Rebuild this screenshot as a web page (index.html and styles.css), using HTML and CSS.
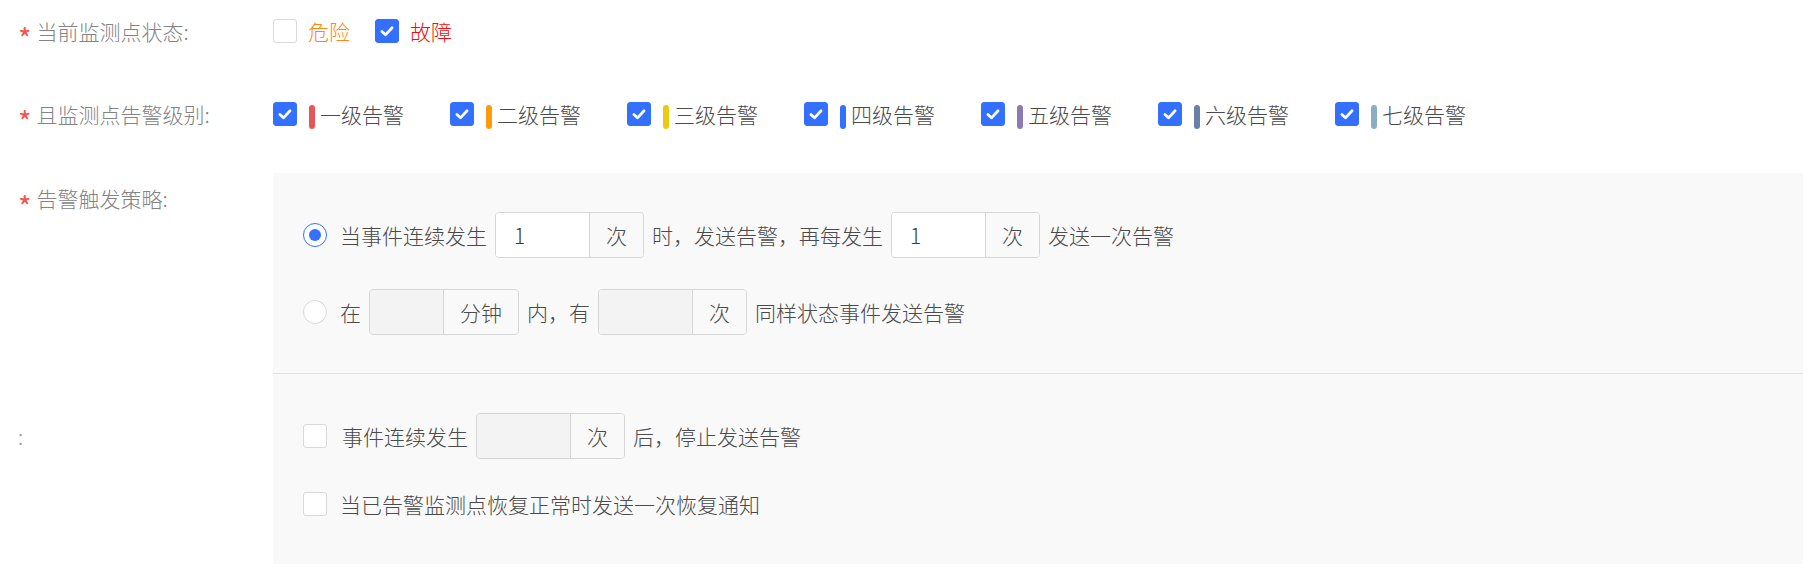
FILE: index.html
```html
<!DOCTYPE html>
<html lang="zh-CN">
<head>
<meta charset="utf-8">
<title>告警策略</title>
<link rel="stylesheet" href="styles.css">
</head>
<body>
<div class="form">
  <div class="item item-status">
    <div class="label"><span class="star">*</span>当前监测点状态:</div>
    <div class="content">
      <label class="chk"><span class="box"></span><span class="txt danger">危险</span></label>
      <label class="chk"><span class="box on"><svg viewBox="0 0 16 16"><path d="M4.3 8.3 L6.9 10.8 L11.7 5.6"/></svg></span><span class="txt fault">故障</span></label>
    </div>
  </div>

  <div class="item item-level">
    <div class="label"><span class="star">*</span>且监测点告警级别:</div>
    <div class="content">
      <label class="lvl"><span class="box on"><svg viewBox="0 0 16 16"><path d="M4.3 8.3 L6.9 10.8 L11.7 5.6"/></svg></span><span class="bar c1"></span><span class="txt">一级告警</span></label>
      <label class="lvl"><span class="box on"><svg viewBox="0 0 16 16"><path d="M4.3 8.3 L6.9 10.8 L11.7 5.6"/></svg></span><span class="bar c2"></span><span class="txt">二级告警</span></label>
      <label class="lvl"><span class="box on"><svg viewBox="0 0 16 16"><path d="M4.3 8.3 L6.9 10.8 L11.7 5.6"/></svg></span><span class="bar c3"></span><span class="txt">三级告警</span></label>
      <label class="lvl"><span class="box on"><svg viewBox="0 0 16 16"><path d="M4.3 8.3 L6.9 10.8 L11.7 5.6"/></svg></span><span class="bar c4"></span><span class="txt">四级告警</span></label>
      <label class="lvl"><span class="box on"><svg viewBox="0 0 16 16"><path d="M4.3 8.3 L6.9 10.8 L11.7 5.6"/></svg></span><span class="bar c5"></span><span class="txt">五级告警</span></label>
      <label class="lvl"><span class="box on"><svg viewBox="0 0 16 16"><path d="M4.3 8.3 L6.9 10.8 L11.7 5.6"/></svg></span><span class="bar c6"></span><span class="txt">六级告警</span></label>
      <label class="lvl"><span class="box on"><svg viewBox="0 0 16 16"><path d="M4.3 8.3 L6.9 10.8 L11.7 5.6"/></svg></span><span class="bar c7"></span><span class="txt">七级告警</span></label>
    </div>
  </div>

  <div class="item item-panel">
    <div class="label label-top1"><span class="star">*</span>告警触发策略:</div>
    <div class="panel panel-first">
      <div class="row">
        <span class="radio on"></span>
        <span>当事件连续发生</span>
        <span class="ig"><span class="in">1</span><span class="add">次</span></span>
        <span>时，发送告警，再每发生</span>
        <span class="ig"><span class="in">1</span><span class="add">次</span></span>
        <span>发送一次告警</span>
      </div>
      <div class="row">
        <span class="radio"></span>
        <span>在</span>
        <span class="ig"><span class="in dis narrow"></span><span class="add">分钟</span></span>
        <span>内，有</span>
        <span class="ig"><span class="in dis"></span><span class="add">次</span></span>
        <span>同样状态事件发送告警</span>
      </div>
    </div>
  </div>

  <div class="item item-panel">
    <div class="label label-top2">:</div>
    <div class="panel panel-second">
      <div class="row">
        <span class="box box-gap1"></span>
        <span>事件连续发生</span>
        <span class="ig"><span class="in dis"></span><span class="add">次</span></span>
        <span>后，停止发送告警</span>
      </div>
      <div class="row">
        <span class="box box-gap2"></span>
        <span>当已告警监测点恢复正常时发送一次恢复通知</span>
      </div>
    </div>
  </div>
</div>
</body>
</html>
```

FILE: styles.css
```css
html, body {
  margin: 0;
  padding: 0;
  background: #ffffff;
}

body {
  font-family: "Noto Sans CJK SC", "Noto Sans", sans-serif;
  font-size: 21px;
  font-weight: 300;
  color: #4a4a4a;
}

.form {
  width: 1803px;
  padding-top: 8px;
}

.item {
  display: flex;
}

.item-status {
  margin-bottom: 38px;
}

.item-level {
  margin-bottom: 37px;
}

.label {
  width: 273px;
  flex: none;
  box-sizing: border-box;
  padding-left: 18px;
  color: #838383;
  height: 45px;
  display: flex;
  align-items: center;
  white-space: nowrap;
}

.star {
  color: #f4554e;
  margin-right: 5px;
  font-size: 29px;
  font-weight: 400;
  line-height: 1;
  transform: translateY(7px);
}

.content {
  display: flex;
  align-items: center;
  height: 45px;
}

.chk,
.lvl {
  display: flex;
  align-items: center;
}

.chk {
  margin-right: 25px;
}

.chk .txt {
  margin-left: 11px;
}

.danger {
  color: #ff8614;
}

.fault {
  color: #f01010;
}

.lvl {
  margin-right: 46px;
}

.box {
  width: 24px;
  height: 24px;
  flex: none;
  box-sizing: border-box;
  border: 1px solid #d9d9d9;
  border-radius: 3px;
  background: #ffffff;
  display: flex;
  align-items: center;
  justify-content: center;
}

.box.on {
  background: #3370ff;
  border-color: #3370ff;
}

.box svg {
  width: 24px;
  height: 24px;
}

.box svg path {
  fill: none;
  stroke: #ffffff;
  stroke-width: 2;
  stroke-linecap: round;
  stroke-linejoin: round;
}

.bar {
  width: 6px;
  height: 24px;
  border-radius: 3px;
  margin: 6px 5px 0 12px;
  flex: none;
}

.c1 { background: #e85757; }
.c2 { background: #ff9a0a; }
.c3 { background: #f2c80f; }
.c4 { background: #3370ff; }
.c5 { background: #8a7bb2; }
.c6 { background: #6a80a9; }
.c7 { background: #8aaec4; }

.item-panel .label {
  height: auto;
  align-self: stretch;
  align-items: flex-start;
  line-height: 45px;
}

.item-panel .label .star {
  line-height: 45px;
}

.label-top1 {
  padding-top: 3px;
}

.label-top2 {
  padding-top: 39px;
  line-height: 46px !important;
  color: #9a9a9a;
}

.panel {
  flex: 1;
  background: #f9f9f9;
  display: flex;
  flex-direction: column;
  padding-left: 30px;
}

.panel-first {
  padding-top: 39px;
  padding-bottom: 38px;
  gap: 31px;
  border-bottom: 1px solid #e2e2e2;
}

.panel-second {
  padding-top: 39px;
  padding-bottom: 37px;
  gap: 22px;
}

.row {
  display: flex;
  align-items: center;
  height: 46px;
  gap: 8px;
  white-space: nowrap;
}

.radio {
  width: 24px;
  height: 24px;
  flex: none;
  box-sizing: border-box;
  border-radius: 50%;
  border: 1px solid #d9d9d9;
  background: #ffffff;
  margin-right: 5px;
  display: flex;
  align-items: center;
  justify-content: center;
}

.radio.on {
  border: 1.5px solid #3370ff;
}

.radio.on::after {
  content: "";
  width: 12px;
  height: 12px;
  border-radius: 50%;
  background: #3370ff;
}

.box-gap1 {
  margin-right: 7px;
}

.box-gap2 {
  margin-right: 5px;
}

.ig {
  display: flex;
  height: 46px;
  box-sizing: border-box;
  border: 1px solid #d6d6d6;
  border-radius: 4px;
  overflow: hidden;
  flex: none;
}

.ig .in {
  width: 94px;
  box-sizing: border-box;
  background: #ffffff;
  border-right: 1px solid #d6d6d6;
  padding-left: 18px;
  display: flex;
  align-items: center;
  color: #3a3a3a;
}

.ig .in.dis {
  background: #f3f3f3;
}

.ig .in.narrow {
  width: 74px;
}

.ig .add {
  padding: 0 16px;
  display: flex;
  align-items: center;
  background: #f9f9f9;
  color: #4a4a4a;
}
```
